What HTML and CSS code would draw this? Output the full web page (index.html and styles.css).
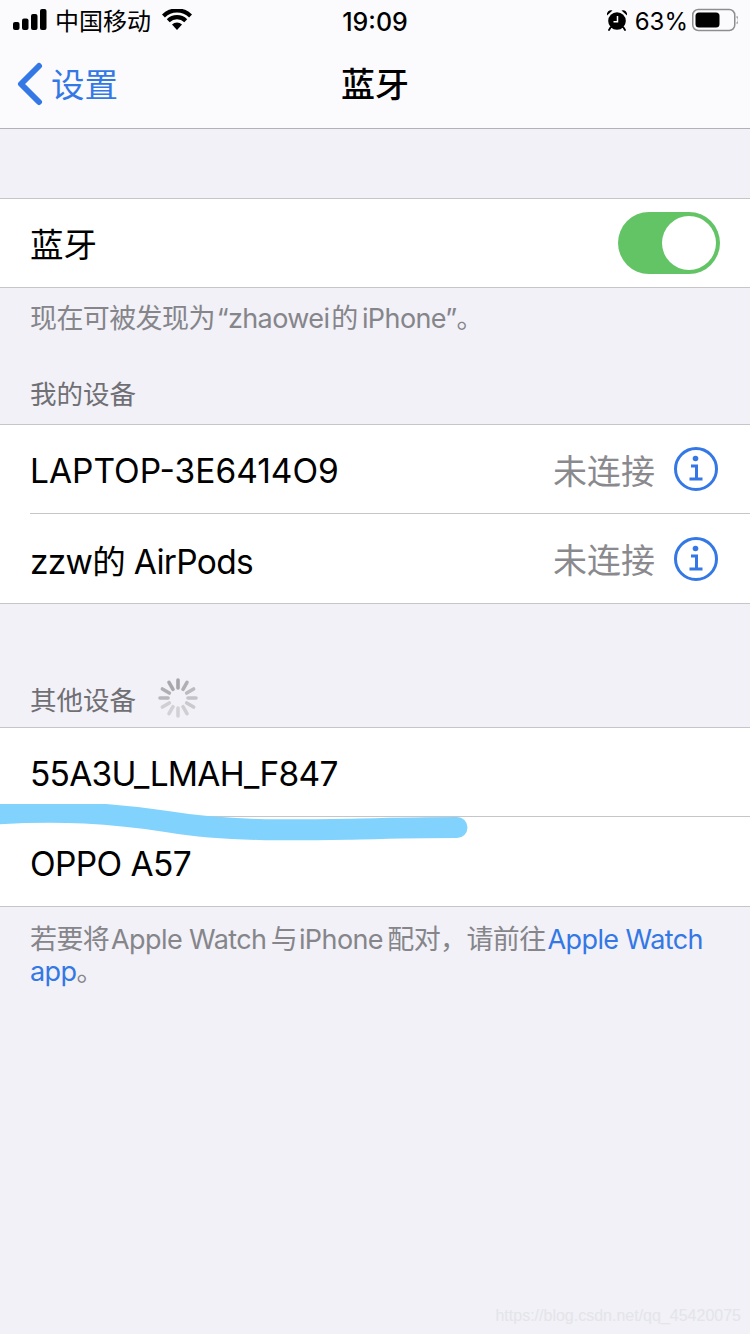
FILE: index.html
```html
<!DOCTYPE html>
<html lang="zh">
<head>
<meta charset="utf-8">
<title>蓝牙</title>
<link rel="stylesheet" href="styles.css">
</head>
<body>
<div class="phone">
  <header class="top">
    <div class="status">
      <div class="status-left">
        <svg class="signal" width="34" height="22" viewBox="0 0 34 22"><rect x="0" y="13" width="6.500" height="8" rx="2"/><rect x="9" y="9.500" width="6.500" height="11.500" rx="2"/><rect x="18" y="5" width="6.500" height="16" rx="2"/><rect x="27" y="0" width="6.500" height="21" rx="2"/></svg>
        <span class="carrier">中国移动</span>
        <svg class="wifi" width="30" height="22" viewBox="0 0 30 22"><path d="M15 21l-5-5.600a7.200 7.200 0 0 1 10 0z"/><path d="M7.700 13.200l-2.900-3a14.600 14.600 0 0 1 20.400 0l-2.900 3a10.600 10.600 0 0 0-14.600 0z"/><path d="M2.900 8.400L0 5.400a21.400 21.400 0 0 1 30 0l-2.900 3a17.400 17.400 0 0 0-24.200 0z"/></svg>
      </div>
      <span class="clock">19:09</span>
      <div class="status-right">
        <svg class="alarm" width="22" height="22" viewBox="0 0 22 22"><circle cx="11" cy="12" r="8.800"/><path d="M1 6.500a4.200 4.200 0 0 1 5.500-5zM21 6.500a4.200 4.200 0 0 0-5.500-5z"/><path d="M4.500 18.500L3 21M17.500 18.500L19 21" stroke="#000" stroke-width="1.800" stroke-linecap="round"/><path d="M11.500 7v5.700H7.500" fill="none" stroke="#fff" stroke-width="1.500"/></svg>
        <span class="percent">63%</span>
        <svg class="battery" width="46" height="24" viewBox="0 0 46 24"><rect x="0.750" y="1.500" width="42" height="21" rx="5.500" fill="none" stroke="#8e8e90" stroke-width="1.500"/><rect x="3.500" y="4.500" width="24" height="15" rx="3.500"/><path d="M44.500 8.500a4 4 0 0 1 0 7" fill="none" stroke="#a8a8aa" stroke-width="1.500"/></svg>
      </div>
    </div>
    <nav class="nav">
      <div class="back">
        <svg class="chev" width="28" height="44" viewBox="0 0 28 44"><path d="M23 4L5 22l18 18" fill="none" stroke="#3478e5" stroke-width="6" stroke-linecap="round" stroke-linejoin="round"/></svg>
        <span>设置</span>
      </div>
      <h1 class="title">蓝牙</h1>
    </nav>
  </header>

  <section class="group first">
    <div class="row row-short">
      <span class="label label-cjk">蓝牙</span>
      <div class="switch"><div class="knob"></div></div>
    </div>
  </section>
  <p class="note note-discover">现在可被发现为&#8202;“zhaowei&#8202;的&#8201;iPhone”。</p>

  <h2 class="head head-mine">我的设备</h2>
  <section class="group">
    <div class="row">
      <span class="label">LAPTOP-3E6414O9</span>
      <div class="detail">
        <span class="state">未连接</span>
        <svg class="info" width="46" height="46" viewBox="0 0 46 46"><circle cx="23" cy="23" r="20.500" fill="none" stroke="#3478e5" stroke-width="3"/><circle cx="22.500" cy="12.500" r="2.800" fill="#3478e5"/><path d="M18 20h5.500v13M16.500 33h13" fill="none" stroke="#3478e5" stroke-width="3"/></svg>
      </div>
    </div>
    <div class="row row-last">
      <span class="label label-pods">zzw的 AirPods</span>
      <div class="detail">
        <span class="state">未连接</span>
        <svg class="info" width="46" height="46" viewBox="0 0 46 46"><circle cx="23" cy="23" r="20.500" fill="none" stroke="#3478e5" stroke-width="3"/><circle cx="22.500" cy="12.500" r="2.800" fill="#3478e5"/><path d="M18 20h5.500v13M16.500 33h13" fill="none" stroke="#3478e5" stroke-width="3"/></svg>
      </div>
    </div>
  </section>

  <div class="head head-other">
    <h2 class="head-text">其他设备</h2>
    <svg class="spinner" width="40" height="40" viewBox="0 0 40 40" stroke-width="3.600" stroke-linecap="round" fill="none">
      <path stroke="#a5a5aa" d="M20 2v8"/>
      <path stroke="#b0b0b4" d="M29 4.400l-4 6.900"/>
      <path stroke="#bcbcc0" d="M35.600 11l-6.900 4"/>
      <path stroke="#c4c4c8" d="M38 20h-8"/>
      <path stroke="#cacace" d="M35.600 29l-6.900-4"/>
      <path stroke="#cfcfd3" d="M29 35.600l-4-6.900"/>
      <path stroke="#d2d2d6" d="M20 38v-8"/>
      <path stroke="#d2d2d6" d="M11 35.600l4-6.900"/>
      <path stroke="#d0d0d4" d="M4.400 29l6.900-4"/>
      <path stroke="#b8b8bc" d="M2 20h8"/>
      <path stroke="#b0b0b4" d="M4.400 11l6.900 4"/>
      <path stroke="#a8a8ac" d="M11 4.400l4 6.900"/>
    </svg>
  </div>
  <section class="group">
    <div class="row row-full"><span class="label label-id">55A3U_LMAH_F847</span></div>
    <div class="row row-last"><span class="label label-oppo">OPPO A57</span></div>
  </section>
  <p class="note note-watch">若要将&#8202;Apple Watch&#8201;与&#8202;iPhone&#8201;配对，请前往&#8202;<span class="link">Apple Watch app</span>。</p>

  <svg class="scribble" width="750" height="60" viewBox="0 0 750 60"><path d="M-4 10C60 6 110 9 170 18C230 28 300 26 360 25C400 24 430 23.500 457 23.500" fill="none" stroke="#81d3fe" stroke-width="21" stroke-linecap="round"/></svg>
  <span class="watermark">https://blog.csdn.net/qq_45420075</span>
</div>
</body>
</html>
```
FILE: styles.css
```css
* { box-sizing: border-box; }
html, body { margin: 0; padding: 0; }
body { font-family: Inter, "Noto Sans CJK SC", sans-serif; color: #000; }
.phone { position: relative; width: 750px; height: 1334px; background: #f1f1f7; overflow: hidden; }
.top { height: 129px; background: #fbfbfe; border-bottom: 1px solid #b2b2b6; }
.status { position: relative; height: 40px; display: flex; align-items: center; justify-content: space-between; padding: 0 12px 0 13px; }
.status-left, .status-right { display: flex; align-items: center; }
.signal { margin-top: -1px; }
.carrier { margin-left: 8px; padding-top: 3px; font-size: 24px; line-height: 40px; }
.wifi { margin-left: 11px; }
.clock { position: absolute; left: 0; right: 0; padding-top: 3px; text-align: center; font-size: 25px; font-weight: 500; line-height: 40px; }
.alarm { margin-right: 7px; }
.percent { padding-top: 3px; font-size: 24px; line-height: 40px; margin-right: 4px; }
.battery { margin-top: -1px; }
.nav { position: relative; height: 88px; display: flex; align-items: center; padding-left: 16px; }
.back { display: flex; align-items: center; color: #3478e5; font-size: 33.500px; }
.back span { margin-top: -4px; }
.chev { margin-right: 7px; }
.title { position: absolute; left: 0; right: 0; top: 0; margin: 0; text-align: center; font-size: 34px; line-height: 90px; font-weight: 500; }
.group { background: #fff; border-top: 1px solid #c6c6c9; border-bottom: 1px solid #c6c6c9; }
.first { margin-top: 69px; }
.row { height: 89px; display: flex; align-items: center; justify-content: space-between; padding: 0 31px 0 0; margin-left: 30px; border-bottom: 1px solid #c6c6c9; }
.row-last { border-bottom: 0; }
.row-short { height: 88px; border-bottom: 0; }
.row-full { margin-left: 0; padding-left: 30px; }
.label { padding-top: 3px; font-size: 33.500px; }
.label-cjk { padding-top: 0; margin-top: -2px; }
.label-pods { padding-top: 1px; letter-spacing: -0.700px; }
.label-id { letter-spacing: -0.750px; }
.label-oppo { padding-top: 4px; letter-spacing: -0.600px; }
.switch { width: 102px; height: 62px; border-radius: 31px; background: #63c466; padding: 4px 4px 4px 44px; margin-right: -1px; }
.knob { width: 54px; height: 54px; border-radius: 50%; background: #fff; }
.detail { display: flex; align-items: center; gap: 18px; }
.state { padding-top: 0; font-size: 34px; color: #8a8a8e; }
.info { display: block; }
.note { margin: 0; padding: 0 30px; font-size: 27px; letter-spacing: -0.600px; line-height: 32px; color: #85858a; }
.note-discover { margin-top: 15px; }
.note-watch { margin-top: 17px; }
.link { color: #3478e5; }
.head { margin: 0; padding: 0 30px; }
.head, .head-text { font-size: 26.500px; font-weight: 400; color: #6f6f74; }
.head-mine { margin-top: 43px; line-height: 32px; margin-bottom: 14px; }
.head-other { display: flex; align-items: center; gap: 22px; height: 40px; margin-top: 74px; margin-bottom: 9px; }
.head-text { margin: 0; }
.scribble { position: absolute; left: 0; top: 804px; }
.watermark { position: absolute; right: 9px; top: 1305px; font-family: "Liberation Sans", sans-serif; font-size: 16px; line-height: 22px; color: #e4e4e9; }
```
